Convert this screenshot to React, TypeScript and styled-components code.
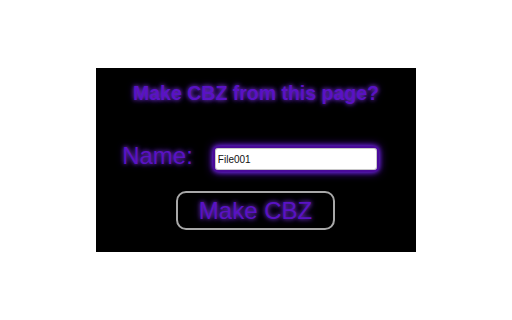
import React from "react";
import styled, { createGlobalStyle } from "styled-components";

const Global = createGlobalStyle`
  html, body { margin: 0; padding: 0; background: #ffffff; }
  body { width: 512px; height: 320px; display: flex; align-items: center; justify-content: center; font-family: "Liberation Sans", Arial, sans-serif; }
`;

const Panel = styled.div`
  width: 320px;
  height: 184px;
  background: #000;
  box-sizing: border-box;
  padding-top: 14px;
  display: flex;
  flex-direction: column;
  align-items: center;
`;

const glow = `0 0 4px rgba(130, 60, 240, 0.85), 0 0 7px rgba(100, 30, 220, 0.6)`;

const Title = styled.h1`
  margin: 0;
  font-size: 19.5px;
  line-height: 22px;
  font-weight: bold;
  color: #5a12c4;
  text-shadow: ${glow};
`;

const Row = styled.div`
  display: flex;
  align-items: center;
  gap: 20px;
  margin-top: 42px;
  margin-right: 11px;
`;

const Label = styled.label`
  font-size: 24px;
  line-height: 26px;
  color: #5a12c4;
  text-shadow: ${glow};
  margin-top: -6px;
`;

const Input = styled.input`
  width: 166px;
  height: 26px;
  box-sizing: border-box;
  border: 2px solid #4a0a9a;
  border-radius: 5px;
  background: #fff;
  padding: 0 3px;
  font-family: "Liberation Sans", Arial, sans-serif;
  font-size: 10px;
  color: #111;
  outline: none;
  box-shadow: inset 0 0 0 1px #c8c8c8, 0 0 5px #7a2cf0, 0 0 10px #5a10d0;
`;

const Button = styled.button`
  margin-top: 19px;
  margin-left: -1px;
  width: 159px;
  height: 39px;
  box-sizing: border-box;
  background: transparent;
  border: 2px solid #a8a8a8;
  border-radius: 10px;
  font-family: "Liberation Sans", Arial, sans-serif;
  font-size: 24px;
  color: #5a12c4;
  text-shadow: ${glow};
  padding: 0;
`;

export default function App() {
  return (
    <>
      <Global />
      <Panel>
        <Title>Make CBZ from this page?</Title>
        <Row>
          <Label>Name:</Label>
          <Input defaultValue="File001" />
        </Row>
        <Button>Make CBZ</Button>
      </Panel>
    </>
  );
}
